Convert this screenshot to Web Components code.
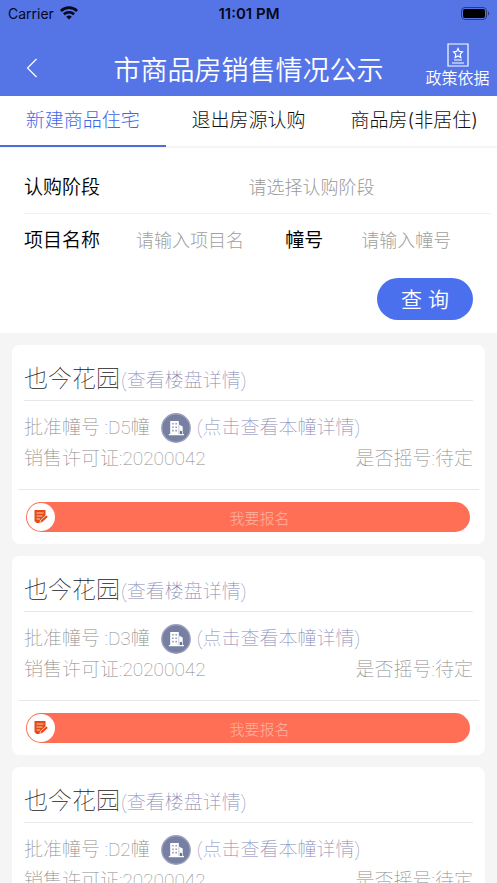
<!DOCTYPE html>
<html lang="zh-CN">
<head>
<meta charset="utf-8">
<meta name="viewport" content="width=device-width, initial-scale=1">
<title>市商品房销售情况公示</title>
<style>
html, body { height: 100%; margin: 0; }
body {
  --brand: #5575e7;
  --accent: #4a70ee;
  font-family: Inter, "Noto Sans CJK SC", sans-serif;
  background: #f5f5f5;
  color: #000;
  overflow: hidden;
}
</style>
</head>
<body>
<housing-app></housing-app>
<script>
function define(name, html, setup) {
  const template = document.createElement('template');
  template.innerHTML = html;
  customElements.define(name, class extends HTMLElement {
    constructor() {
      super();
      this.attachShadow({ mode: 'open' }).append(template.content.cloneNode(true));
    }
    connectedCallback() { if (setup) setup(this, this.shadowRoot); }
  });
}

define('status-bar', `
<style>
:host { display: grid; grid-template-columns: 1fr auto 1fr; align-items: center; height: 26px; padding: 0 7px 0 8px; font-size: 14px; color: #05081a; }
.carrier { display: flex; align-items: center; gap: 6px; }
.time { font-size: 15px; font-weight: 600; }
.battery { justify-self: end; }
svg { display: block; }
</style>
<span class="carrier"><span>Carrier</span>
<svg width="18" height="14" viewBox="0 0 18 14" aria-hidden="true"><g fill="none" stroke="currentColor" stroke-width="2.600"><path d="M.9 5C5.500.5 12.500.5 17.100 5"/><path d="M3.900 8.300c2.900-2.800 7.300-2.800 10.200 0"/></g><path d="M6.200 10.700c1.600-1.500 4-1.500 5.600 0L9 13.600z" fill="currentColor"/></svg></span>
<span class="time">11:01 PM</span>
<svg class="battery" width="29" height="13" viewBox="0 0 29 13" aria-hidden="true"><rect x=".5" y=".5" width="25" height="12" rx="3.500" fill="none" stroke="#2b3b78"/><rect x="2" y="2" width="22" height="9" rx="2" fill="#000"/><path d="M27 4.500c1.600.6 1.600 3.400 0 4z" fill="#2b3b78"/></svg>
`);

define('nav-header', `
<style>
:host { display: grid; grid-template-columns: 71px 1fr 71px; align-items: center; height: 70px; box-sizing: border-box; padding-top: 10px; color: #fff; }
button { font: inherit; color: inherit; background: none; border: 0; padding: 0; cursor: pointer; }
.back { display: grid; place-items: center; height: 44px; padding: 4px 8px 0 0; }
h1 { margin: 0; padding-top: 10px; font-size: 27px; line-height: 40px; font-weight: 350; text-align: center; white-space: nowrap; }
.policy { display: flex; flex-direction: column; align-items: center; font-size: 16px; line-height: 22px; font-weight: 350; padding: 0 8px 0 0; white-space: nowrap; }
svg { display: block; }
</style>
<button class="back" aria-label="返回"><svg width="12" height="20" viewBox="0 0 12 20" fill="none" stroke="currentColor" stroke-width="1.200"><path d="M10.500 1 1.500 10l9 9"/></svg></button>
<h1><slot></slot></h1>
<button class="policy"><svg width="22" height="24" viewBox="0 0 22 24" fill="none" stroke="currentColor" stroke-width="1.200"><path d="M1 1h20v22H1z"/><path d="m11 5.500 1.300 2.900 3.200.5-2.300 2.300.6 3.300-2.800-1.600-2.800 1.600.6-3.300-2.300-2.300 3.200-.5z"/><path d="M7 17h8M5 20h12"/></svg><span>政策依据</span></button>
`);

define('tab-bar', `
<style>
:host { display: grid; grid-template-columns: repeat(3, 1fr); height: 52px; box-sizing: border-box; background: #fff; border-bottom: 2px solid #f5f5f5; }
button { font: inherit; font-size: 19px; font-weight: 300; line-height: 28px; color: #111; background: none; border: 0; border-bottom: 2px solid transparent; padding: 0; height: 51px; white-space: nowrap; }
button[aria-selected=true] { color: #3f68ea; border-color: #4b6edb; }
</style>
<button role="tab" aria-selected="true">新建商品住宅</button>
<button role="tab" aria-selected="false">退出房源认购</button>
<button role="tab" aria-selected="false">商品房(非居住)</button>
`, (host, root) => {
  host.setAttribute('role', 'tablist');
  const tabs = root.querySelectorAll('button');
  tabs.forEach(tab => tab.onclick = () => tabs.forEach(t => t.setAttribute('aria-selected', t === tab)));
});

define('search-form', `
<style>
:host { display: block; background: #fff; }
form { display: grid; grid-template-columns: minmax(0, 1fr); }
.row { display: flex; align-items: center; margin: 0 6px 0 24px; box-sizing: border-box; }
.stage { height: 66px; padding-top: 14px; border-bottom: 1px solid #f1f1f1; }
.names { height: 53px; }
label { font-size: 19px; line-height: 28px; font-weight: 350; white-space: nowrap; }
select, input { font: inherit; font-size: 18px; font-weight: 300; line-height: 28px; height: 36px; border: 0; padding: 0; background: none; min-width: 0; width: 0; color: #999; outline: 0; border-radius: 0; }
select { appearance: none; flex: 1; text-align-last: center; margin-left: 34px; margin-right: 2px; }
input::placeholder { color: #a0a0a0; opacity: 1; }
input { flex: 6; margin-left: 36px; }
.building { font-weight: 400; margin-left: 38px; }
.building + input { flex: 7; margin-left: 38px; }
.actions { display: flex; justify-content: flex-end; padding: 11px 24px 13px; }
button { width: 96px; height: 42px; border: 0; border-radius: 21px; padding: 0 0 2px; background: var(--accent); color: #fff; font: inherit; font-size: 21px; font-weight: 350; }
</style>
<form onsubmit="return false">
<div class="row stage"><label for="stage">认购阶段</label><select id="stage"><option>请选择认购阶段</option></select></div>
<div class="row names"><label for="project">项目名称</label><input id="project" placeholder="请输入项目名"><label class="building" for="building">幢号</label><input id="building" placeholder="请输入幢号"></div>
<div class="actions"><button>查 询</button></div>
</form>
`);

define('building-icon', `
<style>
:host { display: block; width: 30px; height: 30px; }
svg { display: block; width: 100%; height: 100%; }
</style>
<svg viewBox="0 0 30 30" aria-hidden="true"><circle cx="15" cy="15" r="14.200" fill="#777fa2" stroke="#9ba2bd" stroke-width="1.400"/><path d="M9.200 8h8.600v3.500l3.900 2V21h1.300v1.300H7.800V21h1.400z" fill="#fff"/><path d="M11.200 10h1.500v1.600h-1.500zm3.200 0h1.500v1.600h-1.500zm-3.200 3.400h1.500V15h-1.500zm3.200 0h1.500V15h-1.500zm-3.200 3.400h1.500v1.600h-1.500zm3.200 0h1.500v1.600h-1.500z" fill="#9298b5"/><path d="M17.900 12V21" stroke="#a5aac2" stroke-width=".6"/><path d="M18.800 21v-2.200a1.100 1.100 0 0 1 2.200 0V21z" fill="#68718f"/></svg>
`);

define('enroll-button', `
<style>
:host { display: block; }
button { display: grid; grid-template-columns: 30px 1fr; align-items: center; width: 100%; height: 30px; padding: 0 0 0 1px; border: 0; border-radius: 15px; background: #ff6f55; color: #ffb3a2; font: inherit; font-size: 15px; font-weight: 300; }
.badge { display: grid; place-items: center; width: 28px; height: 28px; border-radius: 50%; background: #fff; }
.label { padding-right: 8px; }
</style>
<button><span class="badge"><svg width="16" height="16" viewBox="0 0 16 16" aria-hidden="true"><path d="M1.500 1h11v8L8 14H3.500l-2-2z" fill="#e64a19"/><path d="M3.500 4h7M3.500 7h6M3.500 10h3.500" stroke="#ffc9a8" stroke-width="1.100"/><path d="m6.800 13.800.9-2.700 5.600-5 1.900 1.800-5.600 5.200z" fill="#e64a19" stroke="#fff" stroke-width=".7"/></svg></span><span class="label"><slot></slot></span></button>
`);

define('listing-card', `
<style>
:host { display: block; background: #fff; border-radius: 8px; padding: 13px 6px 12px; color: #888; font-family: Roboto, "Noto Sans CJK SC", sans-serif; font-size: 19px; font-weight: 100; }
h2 { margin: 0; font: inherit; font-size: 24px; color: #222; }
header { display: flex; align-items: baseline; gap: 1px; margin: 0 6px; height: 43px; line-height: 42px; box-sizing: border-box; border-bottom: 1px solid #e8e8e8; }
a { color: #8185b4; text-decoration: none; white-space: nowrap; }
.details { padding: 11px 6px 15px; border-bottom: 1px solid #e8e8e8; }
.line { display: flex; align-items: center; white-space: nowrap; line-height: 31px; height: 31px; }
.line building-icon { margin: 0 6px 0 11px; }
.permit { justify-content: space-between; }
enroll-button { margin: 12px 9px 0 8px; }
</style>
<header><h2><slot></slot></h2><a href="#">(查看楼盘详情)</a></header>
<div class="details">
<div class="line"><span>批准幢号 :<span id="number"></span>幢</span><building-icon></building-icon><a href="#">(点击查看本幢详情)</a></div>
<div class="line permit"><span>销售许可证:20200042</span><span>是否摇号:待定</span></div>
</div>
<enroll-button>我要报名</enroll-button>
`, (host, root) => { root.getElementById('number').textContent = host.getAttribute('building'); });

define('housing-app', `
<style>
:host { display: flex; flex-direction: column; height: 100vh; }
.top { background: var(--brand); }
.top, tab-bar, search-form { flex: none; }
main { flex: 1; min-height: 0; overflow: auto; scrollbar-width: none; display: flex; flex-direction: column; gap: 12px; padding: 12px; }
listing-card { flex: none; }
</style>
<div class="top"><status-bar></status-bar><nav-header>市商品房销售情况公示</nav-header></div>
<tab-bar></tab-bar>
<search-form></search-form>
<main>
<listing-card building="D5">也今花园</listing-card>
<listing-card building="D3">也今花园</listing-card>
<listing-card building="D2">也今花园</listing-card>
</main>
`);
</script>
</body>
</html>
